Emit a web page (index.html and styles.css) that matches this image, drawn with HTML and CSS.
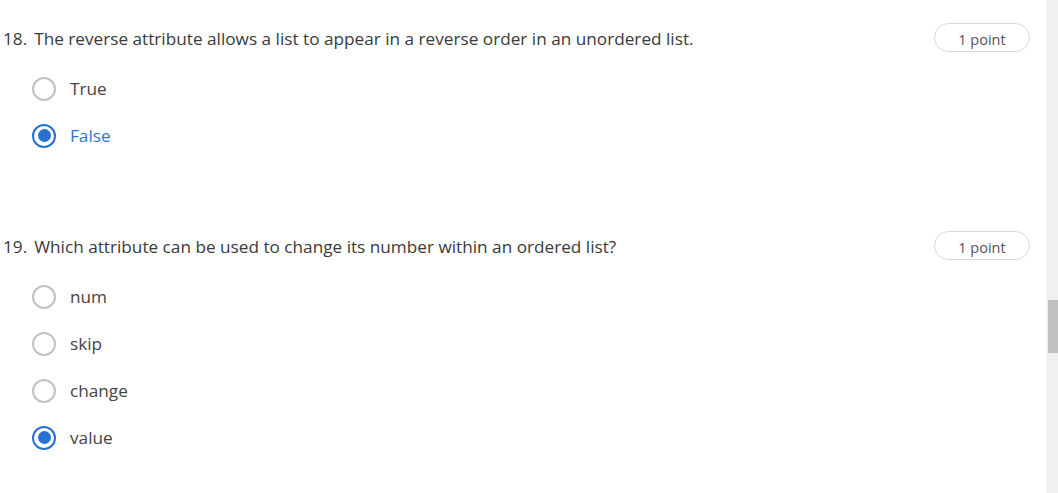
FILE: index.html
```html
<!DOCTYPE html>
<html lang="en">
<head>
<meta charset="utf-8">
<title>Quiz</title>
<link rel="stylesheet" href="styles.css">
</head>
<body>
<div class="page">
  <main class="quiz">
    <section class="question">
      <div class="q-head">
        <div class="q-text"><span class="num">18.</span>The reverse attribute allows a list to appear in a reverse order in an unordered list.</div>
        <div class="points">1 point</div>
      </div>
      <div class="options">
        <label class="option"><span class="radio"></span><span class="label">True</span></label>
        <label class="option checked"><span class="radio"></span><span class="label">False</span></label>
      </div>
    </section>
    <section class="question">
      <div class="q-head">
        <div class="q-text"><span class="num">19.</span>Which attribute can be used to change its number within an ordered list?</div>
        <div class="points">1 point</div>
      </div>
      <div class="options">
        <label class="option"><span class="radio"></span><span class="label">num</span></label>
        <label class="option"><span class="radio"></span><span class="label">skip</span></label>
        <label class="option"><span class="radio"></span><span class="label">change</span></label>
        <label class="option checked plain"><span class="radio"></span><span class="label">value</span></label>
      </div>
    </section>
  </main>
  <div class="scrollbar"><div class="thumb"></div></div>
</div>
</body>
</html>
```

FILE: styles.css
```css
html, body {
  margin: 0;
  padding: 0;
  background: #fff;
  overflow: hidden;
}
body {
  font-family: "Open Sans", "Noto Sans", sans-serif;
  color: #3b3b3b;
}
.page {
  display: flex;
  width: 1058px;
  height: 493px;
}
.quiz {
  flex: 1;
  padding: 23px 16px 0 3px;
}
.question {
  margin-bottom: 72px;
}
.q-head {
  display: flex;
  align-items: center;
  justify-content: space-between;
  height: 29px;
}
.q-text {
  font-size: 17.2px;
  color: #3a3a3a;
  padding-top: 1px;
}
.num {
  margin-right: 7px;
}
.points {
  box-sizing: border-box;
  height: 29px;
  width: 96px;
  border: 1px solid #dadada;
  border-radius: 15px;
  padding-top: 6px;
  text-align: center;
  font-size: 14.5px;
  line-height: 20px;
  color: #555;
}
.options {
  margin-top: 13px;
  display: flex;
  flex-direction: column;
}
.option {
  height: 47px;
  display: flex;
  align-items: center;
  padding-left: 29px;
}
.radio {
  width: 24px;
  height: 24px;
  box-sizing: border-box;
  border: 2px solid #c2c2c2;
  border-radius: 50%;
  margin-right: 14px;
  display: flex;
  align-items: center;
  justify-content: center;
}
.label {
  font-size: 17.2px;
  color: #444;
}
.checked .radio {
  border: 2.5px solid #2670d2;
}
.checked .radio::after {
  content: "";
  width: 13px;
  height: 13px;
  border-radius: 50%;
  background: #2670d2;
}
.checked .label {
  color: #2a76d0;
}
.checked.plain .label {
  color: #444;
}
.scrollbar {
  width: 12px;
  background: #f0f0f0;
  padding-top: 300px;
  box-sizing: border-box;
  display: flex;
  justify-content: flex-end;
  align-items: flex-start;
}
.thumb {
  width: 10px;
  height: 53px;
  background: #c1c1c1;
}
```
